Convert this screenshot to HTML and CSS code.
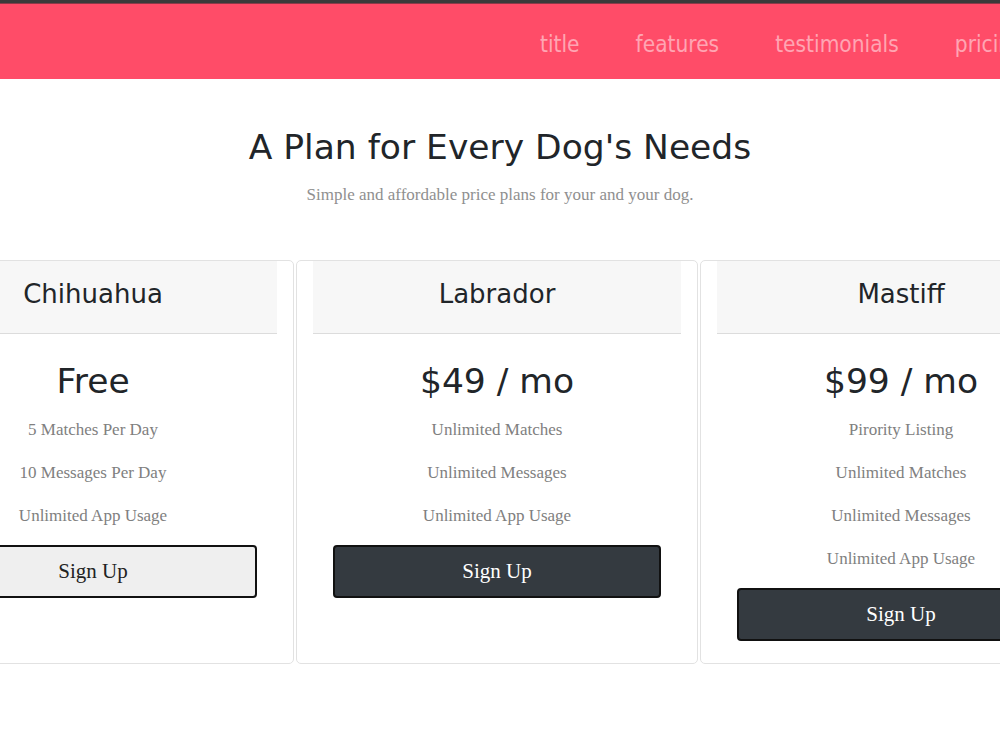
FILE: index.html
```html
<!DOCTYPE html>
<html lang="en">
<head>
    <meta charset="UTF-8">
    <meta name="viewport" content="width=device-width, initial-scale=1.0">
    <title>TinDog Pricing</title>
    <link rel="stylesheet" href="styles.css">
</head>
<body>
    <div class="topbar"></div>
    <nav class="navbar">
        <ul class="nav_links">
            <li><a href="#title">title</a></li>
            <li><a href="#features">features</a></li>
            <li><a href="#testimonials">testimonials</a></li>
            <li><a href="#pricing">pricing</a></li>
        </ul>
    </nav>

    <section class="pricing" id="pricing">
        <h2 class="section_heading">A Plan for Every Dog's Needs</h2>
        <p class="section_sub">Simple and affordable price plans for your and your dog.</p>

        <div class="cards">
            <div class="card">
                <div class="card_header"><h3>Chihuahua</h3></div>
                <div class="card_body">
                    <h2 class="price">Free</h2>
                    <p>5 Matches Per Day</p>
                    <p>10 Messages Per Day</p>
                    <p>Unlimited App Usage</p>
                    <button class="btn btn_light">Sign Up</button>
                </div>
            </div>

            <div class="card">
                <div class="card_header"><h3>Labrador</h3></div>
                <div class="card_body">
                    <h2 class="price">$49 / mo</h2>
                    <p>Unlimited Matches</p>
                    <p>Unlimited Messages</p>
                    <p>Unlimited App Usage</p>
                    <button class="btn btn_dark">Sign Up</button>
                </div>
            </div>

            <div class="card">
                <div class="card_header"><h3>Mastiff</h3></div>
                <div class="card_body">
                    <h2 class="price">$99 / mo</h2>
                    <p>Pirority Listing</p>
                    <p>Unlimited Matches</p>
                    <p>Unlimited Messages</p>
                    <p>Unlimited App Usage</p>
                    <button class="btn btn_dark">Sign Up</button>
                </div>
            </div>
        </div>
    </section>
</body>
</html>
```

FILE: styles.css
```css
body{
    margin: 0;
    background-color: #fff;
    font-family: "Liberation Serif", "Times New Roman", serif;
    overflow: hidden;
}

*{
    box-sizing: border-box;
}

.topbar{
    height: 4px;
    background-color: #3a3a3a;
    border-bottom: 1px solid #8a3a48;
}

.navbar{
    background-color: #ff4c68;
    height: 75px;
    display: flex;
    align-items: center;
    padding-top: 4px;
}

.nav_links{
    list-style: none;
    margin: 0 0 0 540px;
    padding: 0;
    display: flex;
    gap: 56px;
    white-space: nowrap;
}

.nav_links a{
    font-family: "DejaVu Sans Condensed", "DejaVu Sans", sans-serif;
    font-size: 22.5px;
    color: rgba(255, 255, 255, 0.5);
    text-decoration: none;
}

.pricing{
    text-align: center;
    padding-top: 47px;
}

.section_heading{
    font-family: "DejaVu Sans", sans-serif;
    font-weight: normal;
    font-size: 34.5px;
    color: #212529;
    margin: 0;
    line-height: 42px;
}

.section_sub{
    color: #8f8f8f;
    font-size: 17px;
    margin: 17px 0 0;
}

.cards{
    display: flex;
    gap: 2px;
    width: 1210px;
    margin: 55px 0 0 -108px;
}

.card{
    width: 402px;
    flex: none;
    border: 1px solid #e2e2e2;
    border-radius: 5px;
    padding: 0 16px 22px;
}

.card_header{
    background-color: #f7f7f7;
    border-bottom: 1px solid #dcdcdc;
    height: 73px;
    padding-bottom: 6px;
    display: flex;
    align-items: center;
    justify-content: center;
}

.card_header h3{
    font-family: "DejaVu Sans", sans-serif;
    font-weight: normal;
    font-size: 26px;
    color: #212529;
    margin: 0;
}

.card_body{
    padding: 26px 20px 0;
}

.price{
    font-family: "DejaVu Sans", sans-serif;
    font-weight: normal;
    font-size: 34.5px;
    color: #212529;
    margin: 0 0 18px;
    line-height: 42px;
}

.card_body p{
    color: #808080;
    font-size: 17px;
    line-height: 19px;
    margin: 0 0 24px;
}

.card_body p:last-of-type{
    margin-bottom: 20px;
}

.btn{
    width: 100%;
    height: 53px;
    font-family: "Liberation Serif", "Times New Roman", serif;
    font-size: 21px;
    border: 2px solid #111;
    border-radius: 4px;
    cursor: pointer;
}

.btn_light{
    background-color: #efefef;
    color: #222;
}

.btn_dark{
    background-color: #343a40;
    color: #fff;
}
```
